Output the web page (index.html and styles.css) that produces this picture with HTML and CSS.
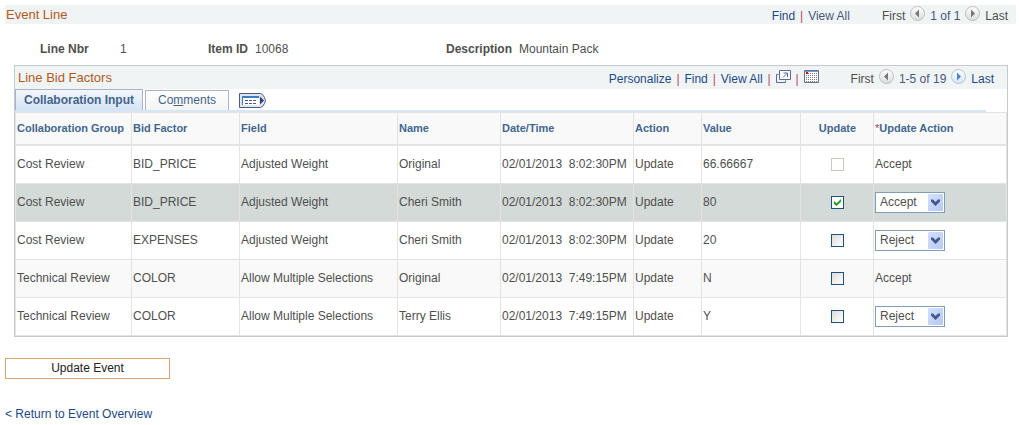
FILE: index.html
```
<!DOCTYPE html>
<html lang="en">
<head>
  <meta charset="UTF-8" />
  <meta name="viewport" content="width=device-width, initial-scale=1.0" />
  <title>Event Line</title>
  <link rel="stylesheet" href="styles.css">
</head>
<body>
  <!-- shared icons -->
  <svg class="sprite" aria-hidden="true">
    <defs>
      <linearGradient id="ball" x1="0" y1="0" x2="0" y2="1">
        <stop offset="0" stop-color="#ffffff" />
        <stop offset="1" stop-color="#dcdcdc" />
      </linearGradient>
      <linearGradient id="ballBlue" x1="0" y1="0" x2="0" y2="1">
        <stop offset="0" stop-color="#ffffff" />
        <stop offset="1" stop-color="#d8e4f2" />
      </linearGradient>
    </defs>
    <symbol id="prev" viewBox="0 0 15 15">
      <circle cx="7.5" cy="7.5" r="7" fill="url(#ball)" stroke="#bdbdbd" />
      <path d="M9 3.5v8L5 7.5z" fill="#777" />
    </symbol>
    <symbol id="next" viewBox="0 0 15 15">
      <circle cx="7.5" cy="7.5" r="7" fill="url(#ball)" stroke="#bdbdbd" />
      <path d="M6 3.5v8l4-4z" fill="#777" />
    </symbol>
    <symbol id="next-active" viewBox="0 0 15 15">
      <circle cx="7.5" cy="7.5" r="7" fill="url(#ballBlue)" stroke="#b4c3d4" />
      <path d="M6 3.5v8l4-4z" fill="#4a86c8" />
    </symbol>
    <symbol id="chevron" viewBox="0 0 15 17">
      <path d="M3 5.5h2l2.500 2.500 2.500-2.500h2v2L7.500 12 3 7.500z" fill="#46588a" />
    </symbol>
  </svg>

  <main>
    <div class="bar">
      <h1>Event Line</h1>
      <div class="links">
        <a href="#">Find</a><i>|</i><span>View All</span>
      </div>
      <div class="pager">
        <span>First</span>
        <svg class="ball"><use href="#prev" /></svg>
        <span class="count">1 of 1</span>
        <svg class="ball"><use href="#next" /></svg>
        <span>Last</span>
      </div>
    </div>

    <dl class="fields">
      <dt>Line Nbr</dt><dd>1</dd>
      <dt>Item ID</dt><dd>10068</dd>
      <dt>Description</dt><dd>Mountain Pack</dd>
    </dl>

    <section class="grid">
      <div class="bar grid-bar">
        <h2>Line Bid Factors</h2>
        <div class="links">
          <a href="#">Personalize</a><i>|</i><a href="#">Find</a><i>|</i><a href="#">View All</a><i>|</i>
          <a href="#" class="icon" aria-label="Zoom">
            <svg width="15" height="13" viewBox="0 0 15 13" fill="none" stroke="#5c6b96">
              <path d="M2.500 4.500h-2v8h9v-2" />
              <path d="M3.500.5h11v9h-11z" fill="#fff" />
              <path d="M7 7.500l4-4M7.500 3h4v4" />
            </svg>
          </a><i>|</i>
          <a href="#" class="icon" aria-label="Download">
            <svg width="15" height="13" viewBox="0 0 15 13">
              <path d="M.5.5h14v12H.5z" fill="#fff" stroke="#5f7199" />
              <path d="M1 1.500h13" stroke="#7f9ac8" />
              <path d="M2 3.500h12M2 5.500h12M2 7.500h12M2 9.500h12M2 11.500h12" stroke="#7d7d7d" stroke-dasharray="1 1" />
              <path d="M2 2h2v2H2z" fill="#e00" />
            </svg>
          </a>
        </div>
        <div class="pager">
          <span>First</span>
          <svg class="ball"><use href="#prev" /></svg>
          <span class="count">1-5 of 19</span>
          <svg class="ball"><use href="#next-active" /></svg>
          <a href="#">Last</a>
        </div>
      </div>

      <div class="tabs">
        <button type="button" class="tab active">Collaboration Input</button>
        <button type="button" class="tab">Co<u>m</u>ments</button>
        <button type="button" class="show-all" aria-label="Show all columns">
          <svg width="27" height="15" viewBox="0 0 27 15">
            <path d="M.5.5h21l2 1 2 3 1 3-1 3-2 3-2 1H.5z" fill="#dce6f6" stroke="#4f5b76" />
            <path d="M3 3h17v9H3z" fill="#fff" />
            <path d="M3 4h17" stroke="#3f7cc4" stroke-width="2" />
            <path d="M3.500 4v8" stroke="#3f7cc4" />
            <path d="M6 7.500h3m1 0h3m1 0h3M6 10.500h3m1 0h3m1 0h3" stroke="#4f5b76" />
            <path d="M21 3.500v8l4-4z" fill="#33406e" />
          </svg>
        </button>
      </div>

      <table>
        <colgroup>
          <col class="c-group"><col class="c-factor"><col class="c-field"><col class="c-name"><col class="c-date">
          <col class="c-action"><col class="c-value"><col class="c-update"><col>
        </colgroup>
        <thead>
          <tr>
            <th>Collaboration Group</th>
            <th>Bid Factor</th>
            <th>Field</th>
            <th>Name</th>
            <th>Date/Time</th>
            <th>Action</th>
            <th>Value</th>
            <th class="center">Update</th>
            <th><span class="req">*</span>Update Action</th>
          </tr>
        </thead>
        <tbody>
          <tr>
            <td>Cost Review</td>
            <td>BID_PRICE</td>
            <td>Adjusted Weight</td>
            <td>Original</td>
            <td>02/01/2013&nbsp; 8:02:30PM</td>
            <td>Update</td>
            <td>66.66667</td>
            <td class="center"><input type="checkbox" aria-label="Update row 1" disabled></td>
            <td>Accept</td>
          </tr>
          <tr class="selected">
            <td>Cost Review</td>
            <td>BID_PRICE</td>
            <td>Adjusted Weight</td>
            <td>Cheri Smith</td>
            <td>02/01/2013&nbsp; 8:02:30PM</td>
            <td>Update</td>
            <td>80</td>
            <td class="center"><input type="checkbox" aria-label="Update row 2" checked></td>
            <td>
              <div class="select">
                <select aria-label="Update action row 2"><option selected>Accept</option><option>Reject</option></select>
                <svg><use href="#chevron" /></svg>
              </div>
            </td>
          </tr>
          <tr>
            <td>Cost Review</td>
            <td>EXPENSES</td>
            <td>Adjusted Weight</td>
            <td>Cheri Smith</td>
            <td>02/01/2013&nbsp; 8:02:30PM</td>
            <td>Update</td>
            <td>20</td>
            <td class="center"><input type="checkbox" aria-label="Update row 3"></td>
            <td>
              <div class="select">
                <select aria-label="Update action row 3"><option>Accept</option><option selected>Reject</option></select>
                <svg><use href="#chevron" /></svg>
              </div>
            </td>
          </tr>
          <tr class="alt">
            <td>Technical Review</td>
            <td>COLOR</td>
            <td>Allow Multiple Selections</td>
            <td>Original</td>
            <td>02/01/2013&nbsp; 7:49:15PM</td>
            <td>Update</td>
            <td>N</td>
            <td class="center"><input type="checkbox" aria-label="Update row 4"></td>
            <td>Accept</td>
          </tr>
          <tr>
            <td>Technical Review</td>
            <td>COLOR</td>
            <td>Allow Multiple Selections</td>
            <td>Terry Ellis</td>
            <td>02/01/2013&nbsp; 7:49:15PM</td>
            <td>Update</td>
            <td>Y</td>
            <td class="center"><input type="checkbox" aria-label="Update row 5"></td>
            <td>
              <div class="select">
                <select aria-label="Update action row 5"><option>Accept</option><option selected>Reject</option></select>
                <svg><use href="#chevron" /></svg>
              </div>
            </td>
          </tr>
        </tbody>
      </table>
    </section>

    <button type="button" class="update">Update Event</button>
    <a href="#" class="back">&lt; Return to Event Overview</a>
  </main>
</body>
</html>
```
FILE: styles.css
```
*, *::before, *::after {
  margin: 0;
  padding: 0;
  box-sizing: border-box;
}

body {
  font-family: "Liberation Sans", Arial, sans-serif;
  font-size: 12px;
  line-height: 15px;
  color: #4f4f4f;
  background: #fff;
}

main {
  padding: 5px 3px 0 5px;
}

a {
  color: #1d4a87;
  text-decoration: none;
}

button, select {
  font: inherit;
  color: inherit;
}

.sprite {
  position: absolute;
  width: 0;
  height: 0;
}

/* title bars */
.bar {
  display: flex;
  align-items: center;
  height: 19px;
  padding-right: 8px;
  background: #f0f4f5;
  white-space: nowrap;
}

h1, h2 {
  flex: 1;
  font-size: 13px;
  font-weight: normal;
  color: #b3591c;
}

.bar h1 {
  padding-left: 1px;
}

.links, .pager {
  display: flex;
  align-items: center;
  padding-top: 4px;
}

.links {
  color: #4a5878;
}

.links i {
  width: 13px;
  text-align: center;
  font-style: normal;
  color: #b5486c;
}

.links .icon {
  display: flex;
  padding-bottom: 7px;
}

.pager {
  margin-left: 32px;
  gap: 5px;
}

.pager .count {
  color: #44587c;
}

.ball {
  width: 15px;
  height: 15px;
  margin-bottom: 6px;
}

/* line header */
.fields {
  display: grid;
  grid-template-columns: 80px 88px 47px 191px 73px 1fr;
  padding: 18px 0 8px 35px;
}

.fields dt {
  font-weight: bold;
}

/* bid factors grid */
.grid {
  margin: 0 8px 0 9px;
  border: 1px solid #c5cacf;
}

.grid-bar {
  height: 23px;
  padding: 0 13px 0 3px;
}

.tabs {
  display: flex;
  align-items: flex-end;
  gap: 2px;
  height: 23px;
  margin-right: 21px;
  border-bottom: 2px solid #dae5f4;
}

.tab {
  width: 84px;
  height: 20px;
  color: #44648a;
  background: linear-gradient(#fff, #f4f4f4);
  border: 1px solid #a9b2c6;
  border-bottom: none;
}

.tab.active {
  width: 128px;
  height: 21px;
  font-weight: bold;
  background: linear-gradient(#f2f7fc, #d5e3f4);
}

.show-all {
  display: flex;
  margin: 0 0 2px 8px;
  background: none;
  border: none;
}

table {
  width: 100%;
  table-layout: fixed;
  border-collapse: separate;
  border-spacing: 0;
  border: 1px solid #e3e3e3;
  border-width: 1px 0 0 1px;
}

.c-group { width: 116px; }
.c-factor { width: 108px; }
.c-field { width: 158px; }
.c-name { width: 103px; }
.c-date { width: 133px; }
.c-action { width: 68px; }
.c-value { width: 99px; }
.c-update { width: 73px; }

th, td {
  height: 38px;
  padding-left: 1px;
  text-align: left;
  white-space: nowrap;
  border: 1px solid #e3e3e3;
  border-width: 0 1px 1px 0;
}

th {
  height: 33px;
  font-size: 11px;
  color: #41678f;
  background: #f9f9f9;
  border-bottom-width: 2px;
}

.req {
  font-weight: normal;
  color: #a04a5a;
}

.center {
  text-align: center;
}

.selected td {
  background: #d4dad7;
}

.alt td {
  background: #f9f9f9;
}

input[type="checkbox"] {
  appearance: none;
  display: block;
  width: 13px;
  height: 13px;
  margin: 0 auto;
  border: 1px solid #1c5180;
  background: linear-gradient(135deg, #dcdcd7, #fff);
}

input[type="checkbox"]:disabled {
  border-color: #cacab8;
  background: #fff;
}

input[type="checkbox"]:checked {
  background: #fff;
}

input[type="checkbox"]:checked::before {
  content: "";
  display: block;
  width: 7px;
  height: 7px;
  margin: 2px;
  background: #21a121;
  clip-path: polygon(0 29%, 36% 60%, 100% 0, 100% 40%, 36% 100%, 0 70%);
}

.select {
  position: relative;
  width: 70px;
}

.select select {
  appearance: none;
  display: block;
  width: 100%;
  height: 21px;
  padding-left: 4px;
  background: #fff;
  border: 1px solid #7f9db9;
  border-radius: 0;
}

.select svg {
  position: absolute;
  top: 2px;
  right: 2px;
  width: 15px;
  height: 17px;
  background: linear-gradient(135deg, #d5e0fd, #b3c9f8);
  border-radius: 1px;
  pointer-events: none;
}

/* page actions */
.update {
  display: block;
  width: 165px;
  height: 21px;
  margin: 21px 0 28px;
  color: #222;
  background: #fff;
  border: 1px solid #d9a672;
}
```
